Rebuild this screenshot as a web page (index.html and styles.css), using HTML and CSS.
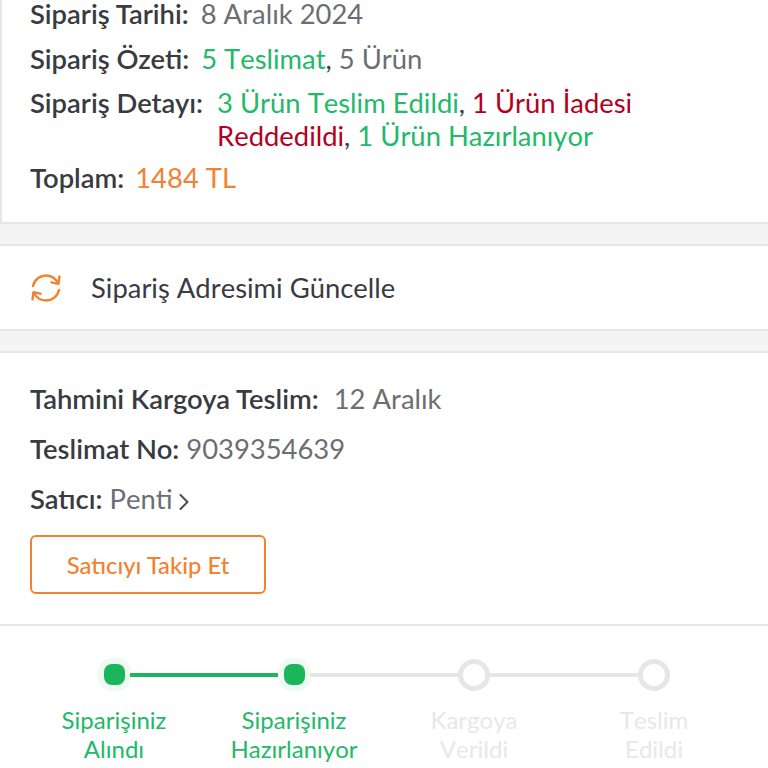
FILE: index.html
```html
<!DOCTYPE html>
<html lang="tr">
<head>
  <meta charset="UTF-8" />
  <meta name="viewport" content="width=device-width, initial-scale=1.0"/>
  <title>Sipariş Detayı</title>
  <link rel="stylesheet" href="styles.css">
</head>
<body>
  <section class="card summary">
    <div class="row"><b>Sipariş Tarihi:</b><span class="muted">8 Aralık 2024</span></div>
    <div class="row"><b>Sipariş Özeti:</b><span class="muted"><span class="green">5 Teslimat</span><span class="dark">,</span> 5 Ürün</span></div>
    <div class="row detail">
      <b>Sipariş Detayı:</b>
      <span class="dark"><span class="green">3 Ürün Teslim Edildi</span>, <span class="red">1 Ürün İadesi Reddedildi</span>, <span class="green">1 Ürün Hazırlanıyor</span></span>
    </div>
    <div class="row total"><b>Toplam:</b><span class="orange">1484 TL</span></div>
  </section>

  <section class="card address">
    <svg class="refresh" viewBox="0 0 32 30" width="32" height="30" fill="none" stroke="#f28230" stroke-width="2.4" stroke-linecap="round" stroke-linejoin="round">
      <path d="M3 13C4.500 6.500 10 2.500 16 2.500C21.500 2.500 25.500 5.500 28 10"/>
      <path d="M29.500 3.500L28.500 10.800L21.500 9.300"/>
      <path d="M29 17C27.500 23.500 22 27.500 16 27.500C10.500 27.500 6.500 24.500 4 20"/>
      <path d="M2.500 26.500L3.500 19.200L10.500 20.700"/>
    </svg>
    <span>Sipariş Adresimi Güncelle</span>
  </section>

  <section class="card shipment">
    <div class="ship-info">
      <div class="ship-row"><b>Tahmini Kargoya Teslim:</b><span class="muted date">12 Aralık</span></div>
      <div class="ship-row"><b>Teslimat No:</b> <span class="muted">9039354639</span></div>
      <div class="ship-row"><b>Satıcı:</b> <span class="muted">Penti</span>
        <svg class="chevron" viewBox="0 0 10 18" width="10" height="18" fill="none" stroke="#4a4d52" stroke-width="2" stroke-linecap="round" stroke-linejoin="round"><path d="M1.500 2L8.500 9L1.500 16"/></svg>
      </div>
      <button class="follow">Satıcıyı Takip Et</button>
    </div>

    <div class="tracker">
      <div class="step done">
        <div class="dot"></div>
        <p>Siparişiniz<br>Alındı</p>
      </div>
      <div class="step done current">
        <div class="dot"></div>
        <p>Siparişiniz<br>Hazırlanıyor</p>
      </div>
      <div class="step">
        <div class="dot"></div>
        <p>Kargoya<br>Verildi</p>
      </div>
      <div class="step last">
        <div class="dot"></div>
        <p>Teslim<br>Edildi</p>
      </div>
    </div>
  </section>
</body>
</html>
```

FILE: styles.css
```css
:root {
  --green: #1bb55c;
  --green-text: #22b968;
  --red: #b5001d;
  --orange: #f28230;
  --dark: #383b40;
  --muted: #6b6e73;
  --line: #e6e6e6;
  --page-bg: #f4f4f4;
}
html, body {
  height: 768px;
  overflow: hidden;
}
body {
  margin: 0;
  font-family: Lato, 'Open Sans', sans-serif;
  font-size: 27.4px;
  font-kerning: none;
  line-height: 33px;
  color: var(--dark);
  background-color: var(--page-bg);
}
b {
  font-weight: 600;
  font-kerning: normal;
}
.card {
  background-color: #fff;
  border-top: 2px solid var(--line);
  border-bottom: 2px solid var(--line);
}
.muted { color: var(--muted); }
.green { color: var(--green-text); }
.red { color: var(--red); }
.orange { color: var(--orange); }
.dark { color: var(--dark); }

.summary {
  margin-top: -3px;
  padding: 0 28px 28px 28px;
  border-top: none;
  border-left: 2px solid var(--line);
}
.row {
  display: flex;
  gap: 12px;
  margin-bottom: 11px;
}
.row:first-child {
  margin-bottom: 12px;
}
.row:last-child {
  margin-bottom: 0;
}
.detail {
  gap: 14px;
  margin-bottom: 9px;
}
.detail b {
  flex-shrink: 0;
}
.detail .dark {
  max-width: 440px;
}
.total {
  gap: 11px;
}

.address {
  margin-top: 20px;
  height: 83px;
  padding-left: 30px;
  display: flex;
  align-items: center;
  gap: 29px;
}
.refresh {
  flex-shrink: 0;
}

.shipment {
  margin-top: 20px;
  border-bottom: none;
}
.ship-info {
  padding: 29px 30px 30px 30px;
  border-bottom: 2px solid var(--line);
}
.ship-row {
  margin-bottom: 17px;
}
.date {
  margin-left: 15px;
}
.chevron {
  margin-left: -1px;
  vertical-align: -2px;
}
.follow {
  display: block;
  width: 236px;
  height: 59px;
  margin-top: 20px;
  background-color: #fff;
  border: 2px solid var(--orange);
  border-radius: 6px;
  color: var(--orange);
  font-family: inherit;
  font-size: 23.8px;
  font-weight: 500;
}

.tracker {
  display: flex;
  justify-content: center;
  padding: 33px 0 40px 0;
  background-color: #fff;
}
.step {
  position: relative;
  width: 180px;
  text-align: center;
  color: #e8e8e8;
  font-size: 24px;
  line-height: 29px;
}
.step p {
  margin: 14px 0 0 0;
}
.step.done {
  color: var(--green-text);
}
.step.done p {
  margin-top: 20px;
}
.dot {
  box-sizing: border-box;
  width: 32px;
  height: 32px;
  margin: 0 auto;
  border: 5px solid var(--line);
  border-radius: 50%;
  background-color: #fff;
}
.step.done .dot {
  width: 21px;
  height: 21px;
  margin: 5px auto 6px auto;
  border: none;
  border-radius: 8px;
  background-color: var(--green);
  box-shadow: 0 0 0 6px #f0faf4;
}
/* connector to the next step */
.step::after {
  content: "";
  position: absolute;
  top: 14px;
  left: calc(50% + 16px);
  width: 148px;
  height: 4px;
  background-color: var(--line);
}
.step.done::after {
  background-color: var(--green);
}
.step.current::after {
  background-color: var(--line);
}
.step.last::after {
  display: none;
}
```
